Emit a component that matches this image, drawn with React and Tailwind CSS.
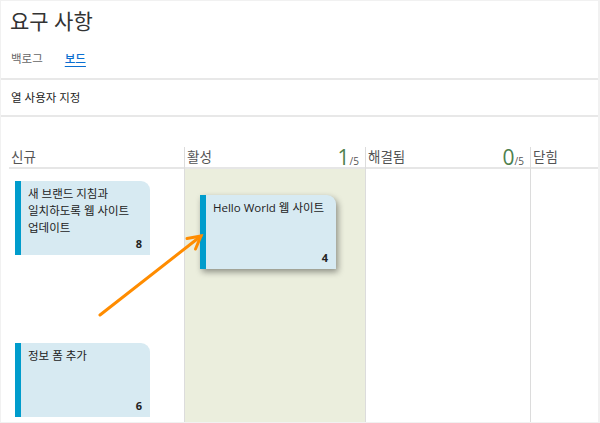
const FONT = '"Open Sans", "Noto Sans CJK KR", sans-serif';

const Card = ( { lines, count, shadow, className = '' } ) => (
	<div
		className={ `flex h-[74px] w-[135px] rounded-tr-[9px] bg-[#d7eaf2] ${
			shadow ? 'shadow-[2px_3px_6px_rgba(0,0,0,0.4)]' : ''
		} ${ className }` }
	>
		<div className="w-[6px] shrink-0 bg-[#009ccc]" />
		<div className="flex flex-1 flex-col justify-between pl-[7px] pr-[8px] pt-[4px] pb-[4px]">
			<div className="text-[11.5px] leading-[17px] text-[#222]">
				{ lines.map( ( l ) => (
					<div key={ l }>{ l }</div>
				) ) }
			</div>
			<div className="text-right text-[11px] font-bold leading-[14px] text-[#222]">
				{ count }
			</div>
		</div>
	</div>
);

const ColumnHeader = ( { title, count, limit } ) => (
	<div className="flex h-[22px] items-center justify-between border-b-2 border-[#e6e6e6] pl-[2px] pr-[6px]">
		<span className="text-[13.5px] leading-[18px] text-[#555]">{ title }</span>
		{ count !== undefined && (
			<span className="flex items-baseline text-[#4e7f4e]">
				<span className="text-[21px] leading-[22px]">{ count }</span>
				<span className="text-[10px] leading-[12px] text-[#555]">/{ limit }</span>
			</span>
		) }
	</div>
);

export default function App() {
	return (
		<div
			className="relative h-[423px] w-[600px] overflow-hidden bg-[#f1f1f1] pt-px pl-px pr-[2px] pb-[1px]"
			style={ { fontFamily: FONT } }
		>
			<div className="flex h-full flex-col bg-white">
				<div className="h-[47px] px-[9px] pt-[6px] text-[21px] leading-[28px] text-[#333]">
					요구 사항
				</div>
				<div className="flex h-[30px] gap-[22px] pl-[10px] pt-[1px] text-[11.5px] leading-[20px]">
					<span className="text-[#666]">백로그</span>
					<span className="font-medium text-[#0a6fd1] underline underline-offset-[3px]">
						보드
					</span>
				</div>
				<div className="h-[2px] bg-[#e8e8e8]" />
				<div className="flex h-[35px] items-center pl-[10px] text-[11.5px] text-[#222]">
					열 사용자 지정
				</div>
				<div className="h-[2px] bg-[#e8e8e8]" />
				<div className="h-[30px]" />
				<div className="flex flex-1 pl-[8px]">
					<div className="flex w-[175px] flex-col">
						<ColumnHeader title="신규" />
						<div className="flex flex-1 flex-col gap-[88px] pl-[6px] pt-[12px]">
							<Card
								lines={ [
									'새 브랜드 지침과',
									'일치하도록 웹 사이트',
									'업데이트',
								] }
								count="8"
							/>
							<Card lines={ [ '정보 폼 추가' ] } count="6" />
						</div>
					</div>
					<div className="flex w-[181px] flex-col border-l border-[#dcdcdc]">
						<ColumnHeader title="활성" count="1" limit="5" />
						<div className="flex-1 bg-[#ebeedd] pl-[15px] pt-[26px]">
							<Card
								lines={ [ 'Hello World 웹 사이트' ] }
								count="4"
								shadow
								className="w-[136px]"
							/>
						</div>
					</div>
					<div className="flex w-[165px] flex-col border-l border-[#dcdcdc]">
						<ColumnHeader title="해결됨" count="0" limit="5" />
						<div className="flex-1" />
					</div>
					<div className="flex flex-1 flex-col border-l border-[#dcdcdc]">
						<ColumnHeader title="닫힘" />
						<div className="flex-1" />
					</div>
				</div>
			</div>
			<svg
				className="pointer-events-none absolute left-0 top-0"
				width="600"
				height="423"
				viewBox="0 0 600 423"
			>
				<g
					stroke="#ff8c00"
					strokeWidth="3"
					strokeLinecap="round"
					fill="none"
				>
					<path d="M100 315 L201 236" />
					<path d="M187 238.5 L201 236 L195.5 249" />
				</g>
			</svg>
		</div>
	);
}
